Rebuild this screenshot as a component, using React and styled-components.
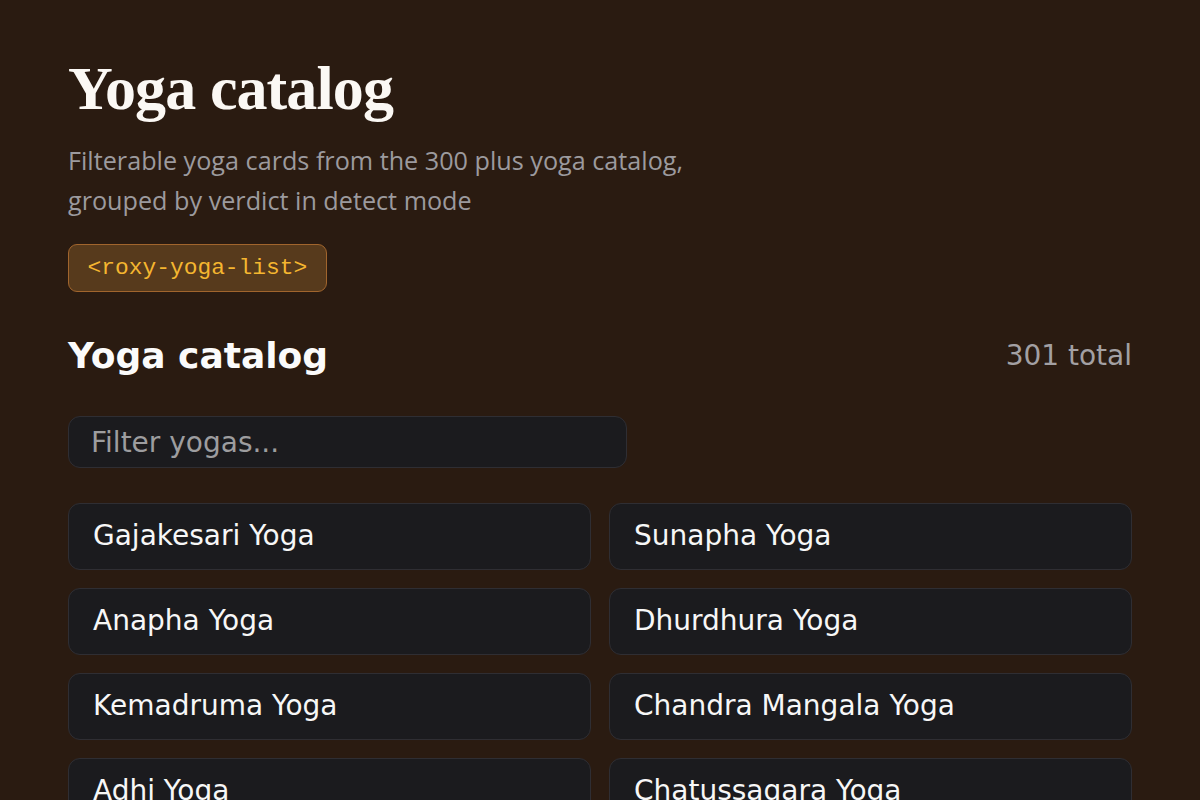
import React from "react";
import styled, { createGlobalStyle } from "styled-components";

const Global = createGlobalStyle`
  html, body { margin: 0; padding: 0; background: #2a1b11; }
  body { font-family: "DejaVu Sans", sans-serif; color: #f2f2f2; }
  * { box-sizing: border-box; }
`;

const Page = styled.main`
  padding: 52px 68px 40px 68px;
  display: flex;
  flex-direction: column;
`;

const Title = styled.h1`
  margin: 0;
  font-family: "Liberation Serif", "DejaVu Serif", serif;
  font-weight: 700;
  font-size: 62px;
  line-height: 72px;
  letter-spacing: -0.9px;
  color: #fbf8f4;
`;

const Subtitle = styled.p`
  margin: 16px 0 0 0;
  max-width: 660px;
  font-family: "Open Sans", Lato, sans-serif;
  font-weight: 400;
  font-size: 25.2px;
  line-height: 40px;
  color: #9c9a9e;
`;

const Badge = styled.code`
  align-self: flex-start;
  margin-top: 24px;
  height: 48px;
  padding: 0 18.5px;
  display: inline-flex;
  align-items: center;
  font-family: "Liberation Mono", "DejaVu Sans Mono", monospace;
  font-size: 22.9px;
  color: #f5b630;
  background: #573a1c;
  border: 1.5px solid #a1652d;
  border-radius: 9px;
`;

const Header = styled.div`
  margin-top: 42px;
  display: flex;
  align-items: center;
  justify-content: space-between;
`;

const Heading = styled.h2`
  margin: 0;
  font-size: 36px;
  line-height: 43px;
  font-weight: 700;
  color: #fbfbfb;
`;

const Count = styled.span`
  font-size: 28px;
  color: #a3a0a3;
`;

const Filter = styled.input`
  margin-top: 39px;
  width: 559px;
  height: 52px;
  padding: 0 22px;
  font-family: "DejaVu Sans", sans-serif;
  font-size: 28px;
  color: #f2f2f2;
  background: #1b1b1e;
  border: 1.5px solid #2f2e33;
  border-radius: 12px;
  outline: none;
  &::placeholder { color: #9d9d9f; }
`;

const Grid = styled.div`
  margin-top: 35px;
  display: grid;
  grid-template-columns: 1fr 1fr;
  gap: 18px;
`;

const Card = styled.div`
  height: 67px;
  padding: 0 24px 3px 24px;
  display: flex;
  align-items: center;
  font-size: 28px;
  color: #f7f7f7;
  background: #1b1b1e;
  border: 1.5px solid #2f2e33;
  border-radius: 12px;
`;

const yogas = [
  "Gajakesari Yoga",
  "Sunapha Yoga",
  "Anapha Yoga",
  "Dhurdhura Yoga",
  "Kemadruma Yoga",
  "Chandra Mangala Yoga",
  "Adhi Yoga",
  "Chatussagara Yoga",
  "Vasumathi Yoga",
  "Rajalakshana Yoga",
];

export default function App() {
  return (
    <>
      <Global />
      <Page>
        <Title>Yoga catalog</Title>
        <Subtitle>
          Filterable yoga cards from the 300 plus yoga catalog, grouped by verdict in detect mode
        </Subtitle>
        <Badge>&lt;roxy-yoga-list&gt;</Badge>
        <Header>
          <Heading>Yoga catalog</Heading>
          <Count>301 total</Count>
        </Header>
        <Filter placeholder="Filter yogas..." />
        <Grid>
          {yogas.map((y) => (
            <Card key={y}>{y}</Card>
          ))}
        </Grid>
      </Page>
    </>
  );
}
